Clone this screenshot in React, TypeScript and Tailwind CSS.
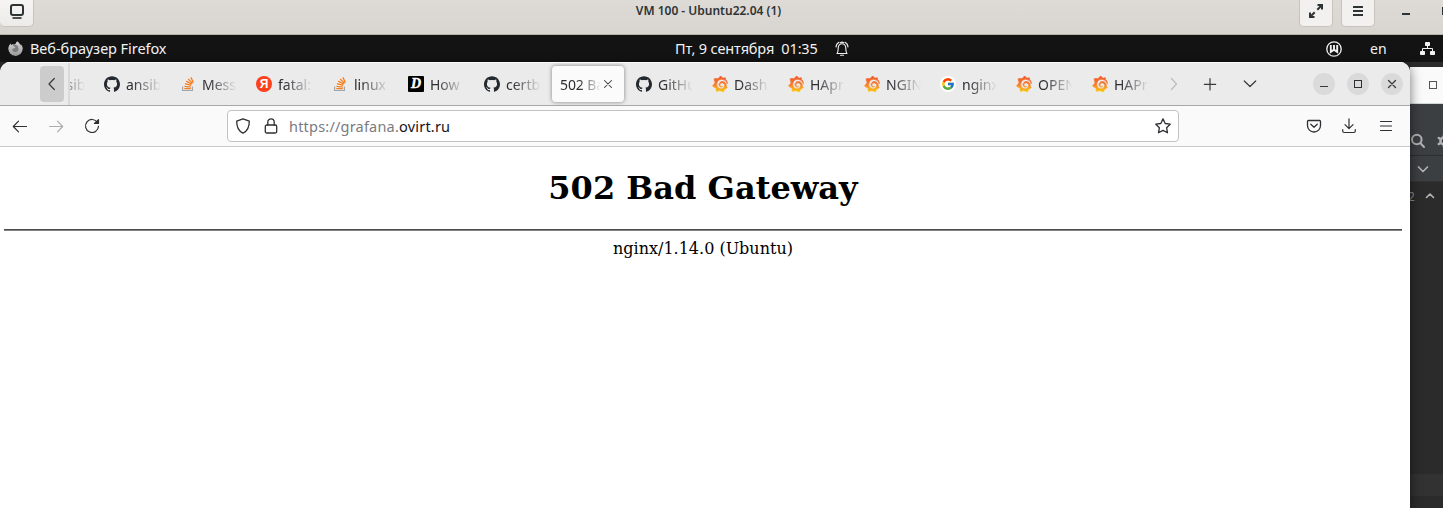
import type { ReactNode } from 'react';
import { SiFirefoxbrowser, SiGithub, SiGrafana } from 'react-icons/si';
import { FcGoogle } from 'react-icons/fc';

type Site = 'github' | 'stack' | 'yandex' | 'ocean' | 'grafana' | 'google' | 'none';

const tabs: { site: Site; label: string; active?: boolean }[] = [
  { site: 'none', label: 'ansib' },
  { site: 'github', label: 'ansib' },
  { site: 'stack', label: 'Mess' },
  { site: 'yandex', label: 'fatal:' },
  { site: 'stack', label: 'linux' },
  { site: 'ocean', label: 'How' },
  { site: 'github', label: 'certb' },
  { site: 'none', label: '502 Ba', active: true },
  { site: 'github', label: 'GitHu' },
  { site: 'grafana', label: 'Dash' },
  { site: 'grafana', label: 'HApr' },
  { site: 'grafana', label: 'NGIN' },
  { site: 'google', label: 'nginx' },
  { site: 'grafana', label: 'OPEN' },
  { site: 'grafana', label: 'HAPr' },
];

function Line({ children, size = 16, width = 1.2, className = '' }: { children: ReactNode; size?: number; width?: number; className?: string }) {
  return (
    <svg width={size} height={size} viewBox="0 0 16 16" fill="none" stroke="currentColor" strokeWidth={width} strokeLinecap="round" strokeLinejoin="round" className={`shrink-0 ${className}`}>
      {children}
    </svg>
  );
}

function SiteIcon({ site }: { site: Site }) {
  if (site === 'github') return <SiGithub size={16} color="#24292f" />;
  if (site === 'grafana') return <SiGrafana size={16} className="fill-[url(#grafana)] stroke-[url(#grafana)] [stroke-width:1.1]" />;
  if (site === 'google')
    return (
      <span className="flex size-4 items-center justify-center rounded-full bg-white">
        <FcGoogle size={14} />
      </span>
    );
  if (site === 'yandex')
    return (
      <span className="flex size-4 items-center justify-center rounded-full bg-[#fc3f1d] font-['Liberation_Sans',sans-serif] text-[12px] leading-none font-bold text-white">
        Я
      </span>
    );
  if (site === 'ocean')
    return (
      <span className="flex size-4 items-center justify-center rounded-[1px] bg-black font-['Liberation_Serif',serif] text-[14px] leading-none font-bold text-white italic [-webkit-text-stroke:0.4px_white]">
        D
      </span>
    );
  if (site === 'stack')
    return (
      <svg width="16" height="16" viewBox="0 0 16 16" fill="none">
        <path d="M2.6 10.5V14.5H12.4V10.5" stroke="#9fa6ad" strokeWidth="1.2" />
        <path d="M4.3 12.7H10.8M4.4 10.4L10.8 11.1M4.9 7.7L11.1 9.4M6.2 5.1L11.7 8.3M8.2 2.9L12.4 7.5M10.8 1.2L13.4 6.6" stroke="#f48024" strokeWidth="1.3" />
      </svg>
    );
  return null;
}

function Tab({ site, label, active }: { site: Site; label: string; active?: boolean }) {
  if (active)
    return (
      <div className="mx-0.5 flex h-9 w-[72px] shrink-0 items-center rounded bg-[#fbfbfb] pl-2 shadow-[0_0_4px_rgba(0,0,0,0.45)]">
        <span className="w-[41px] overflow-hidden pt-px text-[14px] tracking-[-0.1px] whitespace-nowrap text-[#2c2c31] [mask-image:linear-gradient(to_right,black_45%,transparent)]">{label}</span>
        <Line size={14} width={1.2} className="text-[#38383d]"><path d="M4 4l8 8M12 4l-8 8" /></Line>
      </div>
    );
  return (
    <div className="flex h-9 w-[76px] shrink-0 items-center pl-[10px]">
      <span className="flex size-4 shrink-0 items-center"><SiteIcon site={site} /></span>
      <span className="ml-1.5 w-[35px] overflow-hidden pt-px text-[14px] whitespace-nowrap text-[#2c2c31] [mask-image:linear-gradient(to_right,black_18%,transparent)]">{label}</span>
    </div>
  );
}

function ViewerBar() {
  return (
    <header className="flex h-[35px] shrink-0 items-start border-b border-[#b9b2ab] bg-linear-to-b from-[#dedad6] to-[#d8d4cf]">
      <div className="flex h-[27px] w-[34px] shrink-0 justify-center rounded-b-[5px] border-r border-b border-[#c8c3bd] bg-linear-to-b from-[#f6f5f4] to-[#edebe9] pt-1 text-[#2e3436]">
        <svg width="16" height="16" viewBox="0 0 16 16" fill="none" stroke="currentColor" strokeWidth="2">
          <rect x="2" y="1" width="12" height="10" rx="2" />
          <path d="M3.5 14H12.5" strokeWidth="1.7" />
        </svg>
      </div>
      <h1 className="w-[1265px] shrink-0 pt-[3px] pl-[84px] text-center text-[12px] leading-[15px] font-semibold text-[#2e3436]">VM 100 - Ubuntu22.04 (1)</h1>
      <div className="flex h-[27px] w-[34px] shrink-0 justify-center rounded-b-[5px] border-x border-b border-[#c8c3bd] bg-[#f3f1f0] pt-[3px] text-[#2e3436]">
        <svg width="16" height="16" viewBox="0 0 16 16" fill="none" stroke="currentColor" strokeWidth="2">
          <path d="M9.5 2H14V6.500M14 2L9.300 6.700M6.500 14H2V9.500M2 14L6.700 9.300" />
        </svg>
      </div>
      <div className="ml-2 flex h-[27px] w-[34px] shrink-0 justify-center rounded-b-[5px] border-x border-b border-[#c8c3bd] bg-[#f3f1f0] pt-[3px] text-[#2e3436]">
        <svg width="16" height="16" viewBox="0 0 16 16" stroke="currentColor" strokeWidth="2"><path d="M3 4H13M3 8H13M3 12H13" /></svg>
      </div>
      <div className="mt-[13px] ml-[27px] h-0.5 w-2 shrink-0 bg-[#2e3436]" />
      <div className="mt-[7px] ml-[32px] h-2 w-2 shrink-0 border-2 border-[#2e3436]" />
    </header>
  );
}

function SystemBar() {
  return (
    <div className="flex h-[27px] shrink-0 items-center bg-[#131313] pl-2 text-[14px] text-[#f2f2f2]">
      <SiFirefoxbrowser size={15} className="rounded-full bg-radial from-[#7d7d7d] from-45% to-transparent to-46% fill-[url(#fox)]" />
      <span className="ml-[7px] w-[645px] text-[14.500px] tracking-[-0.05px]">Веб-браузер Firefox</span>
      <span className="w-[160px] text-[14.500px] tracking-[-0.150px] whitespace-pre">Пт, 9 сентября  01:35</span>
      <Line width={1.1} className="-ml-px">
        <path d="M3 12.500C4.300 11 4 9 4.200 7C4.400 4.200 5.900 2.800 8 2.800S11.600 4.200 11.800 7C12 9 11.700 11 13 12.500Z" />
        <path d="M6.500 14.300H9.500M2 6C2.200 3.500 3.400 2 5 1.200M14 6C13.800 3.500 12.600 2 11 1.200M6.400 1.700C7.400 1 8.600 1 9.600 1.700" />
      </Line>
      <svg width="16" height="16" viewBox="0 0 16 16" fill="none" stroke="currentColor" className="ml-[476px]">
        <circle cx="8" cy="8" r="7.200" strokeWidth="1.300" />
        <path d="M4.800 4V11L8 8.700L11.200 11V4M8 4V9" strokeWidth="1.900" />
      </svg>
      <span className="ml-7 w-[50px]">en</span>
      <svg width="15" height="14" viewBox="0 0 15 14" fill="currentColor">
        <rect x="5" y="0" width="5" height="4" rx=".8" />
        <rect x="0" y="9" width="5" height="4" rx=".8" />
        <rect x="10" y="9" width="5" height="4" rx=".8" />
        <path d="M7.500 4V6.500M2.500 9V6.500H12.500V9" fill="none" stroke="currentColor" />
      </svg>
    </div>
  );
}

function TabStrip() {
  return (
    <div className="flex h-[44px] shrink-0 items-center border-b border-[#a8a8a8] bg-[#ebebeb] text-[#38383d] shadow-[inset_0_1px_0_#fafafa]">
      <div className="ml-10 flex h-9 w-6 items-center justify-center rounded bg-[#cccccc]">
        <Line width={1.2}><path d="M10.300 2.500L5 8L10.300 13.500" /></Line>
      </div>
      <div className="ml-1 flex h-[42px] w-[1092px] items-center overflow-hidden border-l-2 border-[#dadada]">
        <div className="ml-[-52px] flex">
          {tabs.map((t, i) => <Tab key={i} {...t} />)}
        </div>
      </div>
      <Line width={1.2} className="ml-[6px] text-[#bcbcbc]"><path d="M5.500 2.500L10.500 8L5.500 13.500" /></Line>
      <Line width={1.2} className="ml-5"><path d="M8 2.500V14M2.300 8.300H13.700" /></Line>
      <Line width={1.2} className="ml-6"><path d="M2.300 5L8 10.500L13.700 5" /></Line>
      <div className="ml-[55px] flex gap-3">
        <span className="flex size-[22px] items-center justify-center rounded-full bg-[#dadada]"><Line><path d="M4 10.500H12" strokeLinecap="butt" /></Line></span>
        <span className="flex size-[22px] items-center justify-center rounded-full bg-[#dadada]"><span className="size-2 border border-[#2e2e33]" /></span>
        <span className="flex size-[22px] items-center justify-center rounded-full bg-[#dadada]"><Line width={1.300}><path d="M4.500 4.500l7 7M11.500 4.500l-7 7" /></Line></span>
      </div>
    </div>
  );
}

function NavBar() {
  return (
    <div className="flex h-[41px] shrink-0 items-center border-b border-[#c8c8c8] bg-[#fafafa] text-[#2f2f34]">
      <Line width={1.2} className="ml-3"><path d="M14.500 8.500H1.500M6.500 3.200L1.300 8.500L6.500 13.800" /></Line>
      <Line width={1.2} className="ml-5 text-[#adadad]"><path d="M1.500 8.500H14.500M9.500 3.200L14.700 8.500L9.500 13.800" /></Line>
      <Line width={1.2} className="ml-5"><path d="M13.500 4.500A6.500 6.500 0 1 0 14.500 8.300" /><path d="M14.500 1.700V5.500H10.500Z" fill="currentColor" /></Line>
      <div className="ml-[127px] flex h-8 w-[952px] items-center rounded border border-[#c2c2c2] bg-white">
        <Line width={1.3} className="ml-[7px]"><path d="M8 .8L14.300 3.200C14.400 8.500 12.800 12.800 8 15.200C3.200 12.800 1.600 8.500 1.700 3.200Z" /></Line>
        <Line width={1.3} className="ml-3"><rect x="2.300" y="7" width="11.400" height="8" rx="1.500" /><path d="M4.800 7V4A3.200 3.200 0 0 1 11.200 4V7" /></Line>
        <span className="ml-[10px] w-[866px] pt-0.5 text-[14.500px] tracking-[0.200px] text-[#7b7b7f]">https://grafana.<span className="text-[#15141a]">ovirt.ru</span></span>
        <Line width={1.3}><path d="M8 .9L10.200 5.500L15.200 6.200L11.600 9.700L12.500 14.800L8 12.400L3.500 14.800L4.400 9.700L.8 6.200L5.800 5.500Z" /></Line>
      </div>
      <Line width={1.300} className="ml-[127px]"><path d="M2.500 2.500H13.500Q14.500 2.500 14.500 3.500V7.500A6.500 6.500 0 0 1 1.500 7.500V3.500Q1.500 2.500 2.500 2.500ZM4.800 6.300L8 9.300L11.200 6.300" /></Line>
      <Line width={1.200} className="ml-5 -mr-px -translate-x-px"><path d="M8 .8V10.500M4 6.700L8 10.700L12 6.700M1.700 11.500V13Q1.700 14.500 3.200 14.500H12.800Q14.300 14.500 14.300 13V11.500" /></Line>
      <Line width={1.200} className="ml-[21px]"><path d="M2.500 3.500H13.500M2.500 8H13.500M2.500 12.500H13.500" /></Line>
    </div>
  );
}

function EditorEdge() {
  return (
    <aside className="flex min-w-0 flex-1 flex-col overflow-hidden bg-[#2b2b2b] pt-[5px] text-[#afb1b3]">
      <div className="flex h-[37px] shrink-0 items-center border-b border-[#d0d8d4] bg-[#fafafa] pl-[19px]"><span className="size-2 shrink-0 border border-[#555]" /></div>
      <div className="flex h-[52px] shrink-0 items-end border-b border-[#2b2d2e] bg-[#3c3f41] pb-1.5">
        <Line width={2}><circle cx="6.800" cy="6.500" r="4.800" /><path d="M10.500 10.300L14 14" /></Line>
        <Line width={2.5} className="ml-2.5"><circle cx="8" cy="8" r="3.500" /><path d="M8 2V4M8 12V14M2.800 5L4.500 6M2.800 11L4.500 10" /></Line>
      </div>
      <div className="flex h-[26px] shrink-0 items-center border-b border-[#333] bg-[#3c3f41] pl-[5px]"><Line width={1.700}><path d="M3.500 6L8 10.500L12.500 6" /></Line></div>
      <div className="flex h-7 shrink-0 items-center text-[12px] text-[#888]"><span className="-ml-0.5 w-[14px] pt-px">2</span><Line width={1.600} className="text-[#b5b5b5]"><path d="M4.500 9.500L8 6L11.500 9.500" /></Line></div>
      <div className="mt-[264px] h-[22px] shrink-0 bg-[#323232]" />
    </aside>
  );
}

export default function App() {
  return (
    <div className="flex h-[508px] w-[1443px] flex-col overflow-hidden bg-[#2b2b2b] font-['Noto_Sans',sans-serif]">
      <svg width="0" height="0" className="absolute">
        <defs>
          <linearGradient id="grafana" x1="0" y1="0" x2="0" y2="1"><stop offset="0" stopColor="#f05a28" /><stop offset=".5" stopColor="#f77a32" /><stop offset="1" stopColor="#fbca0a" /></linearGradient>
          <linearGradient id="fox" x1="0" y1="0" x2="0" y2="1"><stop offset="0" stopColor="#d6d6d6" /><stop offset="1" stopColor="#9a9a9a" /></linearGradient>
        </defs>
      </svg>
      <ViewerBar />
      <SystemBar />
      <div className="flex min-h-0 flex-1 bg-[#2b2b2b]">
        <main className="z-10 flex w-[1410px] shrink-0 flex-col overflow-hidden rounded-t-[10px] bg-white shadow-[0_3px_12px_rgba(0,0,0,0.55)]">
          <TabStrip />
          <NavBar />
          <section className="flex flex-col pr-2 pl-1 text-center font-['DejaVu_Serif',serif] text-black">
            <h2 className="pt-[22px] text-[32px] leading-[38px] font-bold">502 Bad Gateway</h2>
            <hr className="mt-[22px] h-0.5 border-0 border-t border-b border-t-[#4d4d4d] border-b-[#808080]" />
            <p className="mt-2 text-[16px] leading-[19px]">nginx/1.14.0 (Ubuntu)</p>
          </section>
        </main>
        <EditorEdge />
      </div>
    </div>
  );
}
